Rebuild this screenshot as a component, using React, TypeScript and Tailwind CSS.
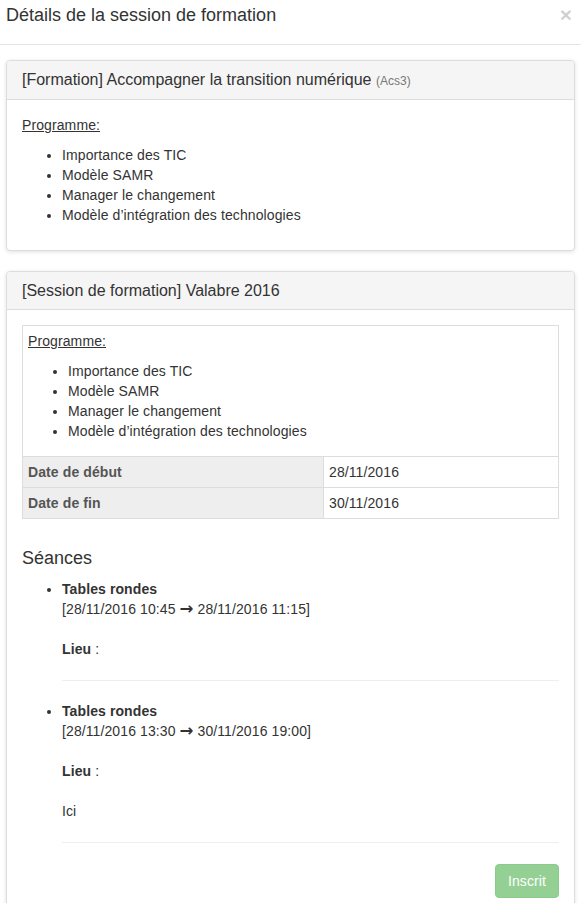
import React from 'react';

const programme = [
  'Importance des TIC',
  'Modèle SAMR',
  'Manager le changement',
  'Modèle d’intégration des technologies',
];

interface Seance {
  title: string;
  start: string;
  end: string;
  lieu?: string;
}

const seances: Seance[] = [
  { title: 'Tables rondes', start: '28/11/2016 10:45', end: '28/11/2016 11:15' },
  { title: 'Tables rondes', start: '28/11/2016 13:30', end: '30/11/2016 19:00', lieu: 'Ici' },
];

function Programme() {
  return (
    <>
      <p className="mb-[10px]">
        <u>Programme:</u>
      </p>
      <ul className="list-disc pl-[40px] mb-[10px]">
        {programme.map((item) => (
          <li key={item}>{item}</li>
        ))}
      </ul>
    </>
  );
}

function Panel({ title, children }: { title: React.ReactNode; children: React.ReactNode }) {
  return (
    <div className="border border-[#ddd] rounded-[4px] bg-white shadow-[0_1px_4px_rgba(0,0,0,0.12)] mb-[20px]">
      <div className="bg-[#f5f5f5] border-b border-[#ddd] rounded-t-[3px] px-[15px] py-[10px] text-[16px] leading-[17.6px]">
        {title}
      </div>
      <div className="p-[15px] tracking-[0.1px]">{children}</div>
    </div>
  );
}

export default function App() {
  return (
    <div className="w-[581px] h-[903px] overflow-hidden bg-white text-[#333] text-[14px] leading-[20px] font-['Liberation_Sans',Arial,sans-serif]">
      <div className="h-[45px] border-b border-[#e5e5e5] px-[6px] flex items-start justify-between">
        <h4 className="text-[18px] leading-[26px] pt-[2px]">Détails de la session de formation</h4>
        <span className="text-[21px] font-bold leading-none text-black/20 mt-[4px] mr-[3px]">×</span>
      </div>

      <div className="px-[6px] pt-[15px]">
        <Panel
          title={
            <>
              [Formation] Accompagner la transition numérique{' '}
              <small className="text-[12px] leading-none text-[#777]">(Acs3)</small>
            </>
          }
        >
          <Programme />
        </Panel>

        <Panel title="[Session de formation] Valabre 2016">
          <table className="w-full border-collapse mb-[30px]">
            <tbody>
              <tr>
                <td colSpan={2} className="border border-[#ddd] p-[5px]">
                  <Programme />
                </td>
              </tr>
              <tr>
                <th className="w-[301px] border border-[#ddd] bg-[#eee] p-[5px] text-left font-bold text-[#555]">
                  Date de début
                </th>
                <td className="border border-[#ddd] p-[5px]">28/11/2016</td>
              </tr>
              <tr>
                <th className="border border-[#ddd] bg-[#eee] p-[5px] text-left font-bold text-[#555]">
                  Date de fin
                </th>
                <td className="border border-[#ddd] p-[5px]">30/11/2016</td>
              </tr>
            </tbody>
          </table>

          <h4 className="text-[18px] leading-[19.8px] mb-[10px] tracking-normal">Séances</h4>
          <ul className="list-disc pl-[40px]">
            {seances.map((s, i) => (
              <li key={i}>
                <b>{s.title}</b>
                <br />[{s.start}{' '}
                <span className="font-['DejaVu_Sans',sans-serif] font-bold text-[16.5px] leading-none">→</span>{' '}
                {s.end}]
                <br />
                <br />
                <b>Lieu</b> :
                {s.lieu && (
                  <>
                    <br />
                    <br />
                    {s.lieu}
                  </>
                )}
                <hr className="border-0 border-t border-[#eee] mt-[21px] mb-[20px]" />
              </li>
            ))}
          </ul>

          <div className="flex justify-end">
            <button
              disabled
              className="mt-[1px] px-[12px] py-[6px] leading-[20px] rounded-[4px] border border-[#4cae4c] bg-[#5cb85c] text-white opacity-65"
            >
              Inscrit
            </button>
          </div>
        </Panel>
      </div>
    </div>
  );
}
